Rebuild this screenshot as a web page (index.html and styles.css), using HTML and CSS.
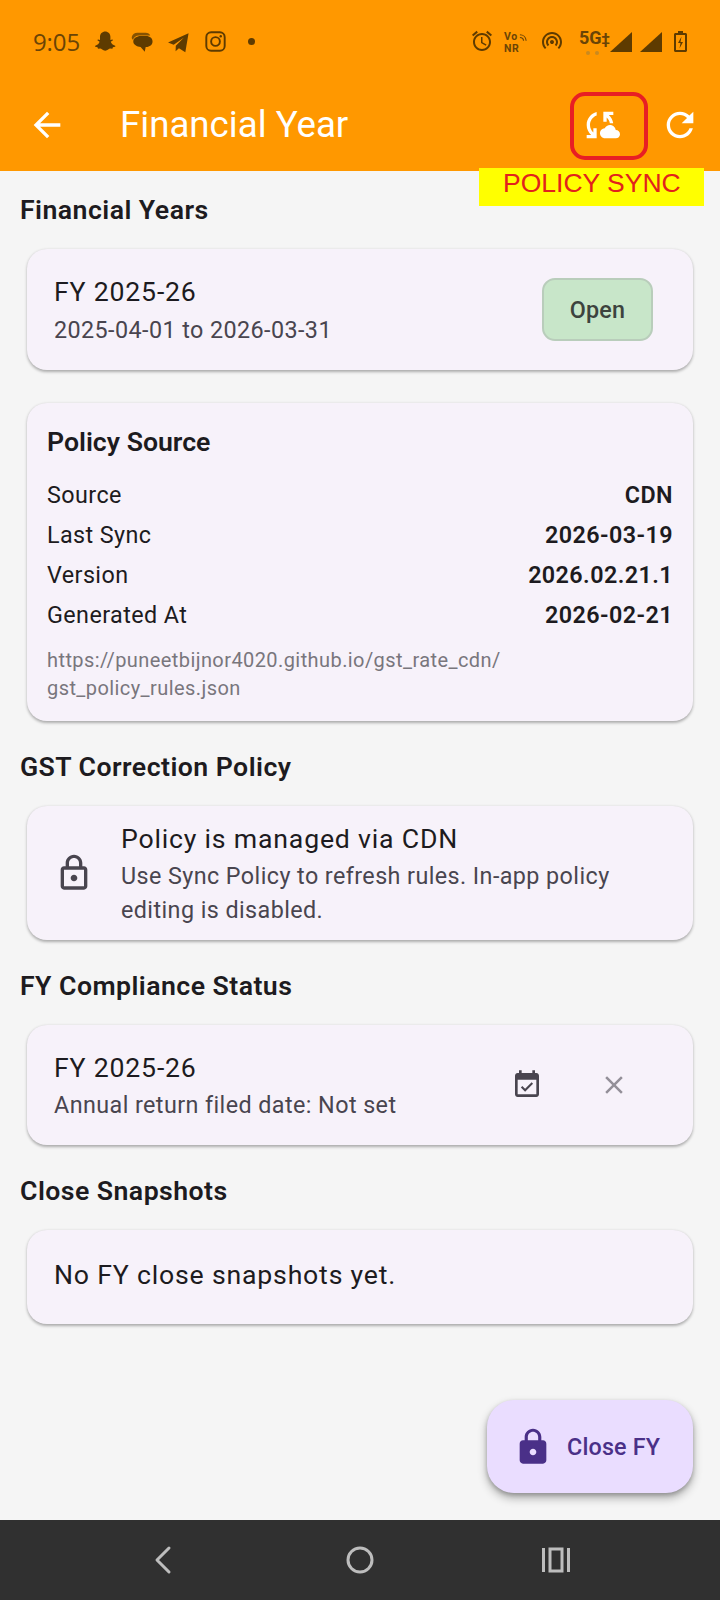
FILE: index.html
```html
<!DOCTYPE html>
<html lang="en">
<head>
<meta charset="utf-8">
<title>Financial Year</title>
<link rel="stylesheet" href="styles.css">
</head>
<body>
<div class="screen">
  <header class="top">
    <div class="status">
      <div class="status-left">
        <span class="time">9:05</span>
        <svg class="si snap" viewBox="1 1 22 22"><path d="M12 1.500c3.300 0 5.400 2.300 5.400 5.300v3.300l1.900-.6c.7 0 .9.8.4 1.100l-1.900 1.100c.5 1.700 2.200 3.400 4.300 4 .5.2.4.9-.1 1l-2.100.5-.5 1.500-2.300-.1c-1 .1-2.500 2.100-4.900 2.100s-3.900-2-4.900-2.100l-2.300.1-.5-1.500-2.100-.5c-.5-.1-.6-.8-.1-1 2.100-.6 3.800-2.300 4.300-4l-1.900-1.100c-.5-.3-.3-1.100.4-1.100l1.900.6V6.800c0-3 2.100-5.300 5.400-5.300z"/></svg>
        <svg class="si msg" viewBox="0 0 24 24"><path d="M7 2h9c2.500 0 4.500 1.300 5 3H9C5.500 5 3 7 2.300 9.500 1 8.800.5 7.500 1 6c.7-2.500 3-4 6-4z" opacity=".75"/><path d="M10.500 5.500h6c4 0 7 2.500 7 6s-3 6-7 6h-.5l-1 5-4.500-5.100c-4-.2-8-2.400-8-5.900 0-3.500 4-6 8-6z"/></svg>
        <svg class="si tg" viewBox="0 0 24 24"><path d="M23.500 1.500 19.800 23 12.500 18.500l-3.800 3.500.2-6.300L18 6.500 6.500 14.500 0 12z"/></svg>
        <svg class="si ig" viewBox="0 0 24 24"><rect x="1.500" y="1.500" width="21" height="21" rx="5.500" fill="none" stroke="#5e3b00" stroke-width="2.200"/><circle cx="12" cy="12" r="5" fill="none" stroke="#5e3b00" stroke-width="2.200"/><circle cx="18" cy="6" r="1.400"/></svg>
        <span class="dot"></span>
      </div>
      <div class="status-right">
        <svg class="si alarm" viewBox="0 0 24 24"><path d="M22 5.720l-4.600-3.860-1.290 1.530 4.600 3.860L22 5.720zM7.880 3.390L6.600 1.860 2 5.710l1.290 1.530 4.590-3.850zM12.500 8H11v6l4.750 2.850.75-1.230-4-2.370V8zM12 4c-4.970 0-9 4.030-9 9s4.030 9 9 9 9-4.030 9-9-4.030-9-9-9zm0 16c-3.870 0-7-3.130-7-7s3.130-7 7-7 7 3.130 7 7-3.130 7-7 7z"/></svg>
        <span class="vonr">
          <span class="vo">Vo<svg class="waves" viewBox="0 0 9 9"><path d="M1 1.500c3.500 0 6.500 2.500 6.800 6.500M1 4.500c2 0 3.800 1.500 4 3.500" fill="none" stroke="#6a4406" stroke-width="1.300"/></svg></span>
          <span>NR</span>
        </span>
        <svg class="si hot" viewBox="0 0 24 24"><path d="M12 11c-1.100 0-2 .9-2 2 0 .55.23 1.050.59 1.410.36.36.86.59 1.410.59s1.050-.23 1.410-.59c.36-.36.59-.86.59-1.410 0-1.100-.9-2-2-2zm6 2c0-3.310-2.690-6-6-6s-6 2.690-6 6c0 1.660.68 3.150 1.760 4.240l1.420-1.420C8.450 15.100 8 14.110 8 13c0-2.210 1.790-4 4-4s4 1.790 4 4c0 1.110-.45 2.100-1.180 2.820l1.420 1.420C17.320 16.150 18 14.660 18 13zM12 3C6.480 3 2 7.480 2 13c0 2.760 1.120 5.260 2.930 7.070l1.420-1.420C4.900 17.210 4 15.210 4 13c0-4.420 3.580-8 8-8s8 3.580 8 8c0 2.210-.9 4.210-2.350 5.650l1.420 1.420C20.880 18.260 22 15.760 22 13c0-5.520-4.480-10-10-10z"/></svg>
        <span class="five"><span class="five-text">5G<small class="dagger">‡</small></span><span class="five-dots"><i></i><i></i></span></span>
        <svg class="si bars" viewBox="0 0 22 20"><path d="M22 0v20H0z"/></svg>
        <svg class="si bars" viewBox="0 0 22 20"><path d="M22 0v20H0z"/></svg>
        <svg class="si batt" viewBox="0 0 13 21"><path d="M4 0h5v2h2.500c.8 0 1.500.7 1.500 1.500v16c0 .8-.7 1.500-1.500 1.500h-10C.7 21 0 20.300 0 19.500v-16C0 2.700.7 2 1.500 2H4zM2 4v15h9V4zm5.500 1.500L4 12h2.500l-1 5.500L9 11H6.500z"/></svg>
      </div>
    </div>
    <div class="toolbar">
      <button class="tool-back" aria-label="Back"><svg class="ic" viewBox="0 0 24 24"><path d="M20 11H7.830l5.590-5.590L12 4l-8 8 8 8 1.410-1.410L7.830 13H20v-2z"/></svg></button>
      <h1 class="app-title">Financial Year</h1>
      <button class="tool-btn" aria-label="Sync Policy"><svg class="ic" viewBox="0 0 24 24"><path d="M21.500 14.980c-.02 0-.03 0-.05.01C21.200 13.300 19.760 12 18 12c-1.400 0-2.600.83-3.160 2.020C13.260 14.100 12 15.400 12 17c0 1.660 1.340 3 3 3l6.500-.02c1.380 0 2.500-1.120 2.500-2.500s-1.120-2.500-2.500-2.500zM10 4.260v2.090C7.670 7.180 6 9.390 6 12c0 1.770.78 3.340 2 4.440V14h2v6H4v-2h2.730C5.060 16.540 4 14.400 4 12c0-3.730 2.550-6.850 6-7.740zM20 6h-2.730c1.430 1.260 2.410 3.010 2.660 5h-2.020c-.23-1.360-.93-2.550-1.910-3.440V10h-2V4h6v2z"/></svg></button>
      <button class="tool-btn" aria-label="Refresh"><svg class="ic" viewBox="0 0 24 24"><path d="M17.650 6.350C16.200 4.900 14.210 4 12 4c-4.420 0-7.990 3.580-7.990 8s3.570 8 7.990 8c3.730 0 6.840-2.550 7.730-6h-2.080c-.82 2.330-3.040 4-5.650 4-3.310 0-6-2.690-6-6s2.690-6 6-6c1.660 0 3.140.69 4.220 1.780L13 11h7V4l-2.350 2.350z"/></svg></button>
    </div>
  </header>

  <main class="content">
    <h2 class="section-title">Financial Years</h2>
    <section class="card row-card fy-card">
      <div class="text-stack">
        <div class="item-title">FY 2025-26</div>
        <div class="item-sub">2025-04-01 to 2026-03-31</div>
      </div>
      <span class="chip">Open</span>
    </section>

    <section class="card policy-card">
      <h3 class="policy-title">Policy Source</h3>
      <div class="kv"><span>Source</span><b>CDN</b></div>
      <div class="kv"><span>Last Sync</span><b>2026-03-19</b></div>
      <div class="kv"><span>Version</span><b>2026.02.21.1</b></div>
      <div class="kv"><span>Generated At</span><b>2026-02-21</b></div>
      <p class="url">https://puneetbijnor4020.github.io/gst_rate_cdn/<br>gst_policy_rules.json</p>
    </section>

    <h2 class="section-title">GST Correction Policy</h2>
    <section class="card row-card lock-card">
      <svg class="ic lock-ic" viewBox="0 0 24 24"><path d="M18 8h-1V6c0-2.760-2.240-5-5-5S7 3.240 7 6v2H6c-1.100 0-2 .9-2 2v10c0 1.100.9 2 2 2h12c1.100 0 2-.9 2-2V10c0-1.100-.9-2-2-2zM9 6c0-1.660 1.340-3 3-3s3 1.340 3 3v2H9V6zm9 14H6V10h12v10zm-6-3c1.100 0 2-.9 2-2s-.9-2-2-2-2 .9-2 2 .9 2 2 2z"/></svg>
      <div class="text-stack">
        <div class="item-title">Policy is managed via CDN</div>
        <div class="item-sub">Use Sync Policy to refresh rules. In-app policy<br>editing is disabled.</div>
      </div>
    </section>

    <h2 class="section-title">FY Compliance Status</h2>
    <section class="card row-card status-card">
      <div class="text-stack">
        <div class="item-title">FY 2025-26</div>
        <div class="item-sub">Annual return filed date: Not set</div>
      </div>
      <div class="actions">
        <button class="act" aria-label="Set date"><svg class="ic cal-ic" viewBox="0 0 24 24"><path d="M19 3h-1V1h-2v2H8V1H6v2H5c-1.110 0-1.990.9-1.990 2L3 19c0 1.100.89 2 2 2h14c1.100 0 2-.9 2-2V5c0-1.100-.9-2-2-2zm0 16H5V8h14v11zm-2.470-7.940L15.470 10l-4.880 4.880-2.120-2.120-1.060 1.060L10.590 17l5.940-5.940z"/></svg></button>
        <button class="act" aria-label="Clear"><svg class="ic x-ic" viewBox="0 0 24 24"><path d="M19 6.410L17.590 5 12 10.590 6.410 5 5 6.410 10.590 12 5 17.590 6.410 19 12 13.410 17.590 19 19 17.590 13.410 12z"/></svg></button>
      </div>
    </section>

    <h2 class="section-title">Close Snapshots</h2>
    <section class="card row-card empty-card">
      <div class="item-title">No FY close snapshots yet.</div>
    </section>
  </main>

  <nav class="navbar">
    <svg class="nav-ic" viewBox="0 0 30 30"><path d="M21 3 9 15l12 12" fill="none" stroke="#bdbdbd" stroke-width="3" stroke-linecap="round" stroke-linejoin="round"/></svg>
    <svg class="nav-ic" viewBox="0 0 30 30"><circle cx="15" cy="15" r="12" fill="none" stroke="#bdbdbd" stroke-width="3"/></svg>
    <svg class="nav-ic" viewBox="0 0 30 30"><path d="M2.500 3v24M27.500 3v24" stroke="#bdbdbd" stroke-width="3" fill="none"/><rect x="9" y="4" width="12" height="22" fill="none" stroke="#bdbdbd" stroke-width="3"/></svg>
  </nav>

  <div class="callout-box"></div>
  <div class="callout-label">POLICY SYNC</div>

  <button class="fab">
    <svg class="ic fab-ic" viewBox="0 0 24 24"><path d="M18 8h-1V6c0-2.760-2.240-5-5-5S7 3.240 7 6v2H6c-1.100 0-2 .9-2 2v10c0 1.100.9 2 2 2h12c1.100 0 2-.9 2-2V10c0-1.100-.9-2-2-2zm-6 9c-1.100 0-2-.9-2-2s.9-2 2-2 2 .9 2 2-.9 2-2 2zm3.100-9H8.900V6c0-1.710 1.390-3.100 3.100-3.100 1.710 0 3.100 1.390 3.100 3.100v2z"/></svg>
    <span>Close FY</span>
  </button>
</div>
</body>
</html>
```

FILE: styles.css
```css
* { box-sizing: border-box; }
html, body { margin: 0; padding: 0; }
body { width: 720px; height: 1600px; overflow: hidden; font-family: Roboto, "Liberation Sans", sans-serif; color: #1d1b20; }
button { border: 0; background: none; padding: 0; font: inherit; color: inherit; display: flex; align-items: center; justify-content: center; }
h1, h2, h3, p { margin: 0; font-weight: inherit; }

.screen { position: relative; width: 720px; height: 1600px; display: flex; flex-direction: column; background: #f5f5f5; overflow: hidden; }
.ic { width: 40px; height: 40px; fill: currentColor; display: block; flex: none; }

/* header */
.top { background: #ff9800; color: #fff; height: 171px; flex: none; }
.status { height: 78px; padding: 31px 33px 0; display: flex; justify-content: space-between; align-items: flex-start; color: #5e3b00; }
.status-left, .status-right { display: flex; align-items: flex-start; height: 22px; }
.si { display: block; fill: #5e3b00; flex: none; }
.time { font-family: "Open Sans", Roboto, sans-serif; font-size: 24px; line-height: 22px; width: 60px; letter-spacing: -.1px; color: #6a4406; }
.snap { width: 24px; height: 22px; }
.msg { width: 22px; height: 22px; margin: 0 0 0 14px; }
.tg { width: 23px; height: 21px; margin: 1px 0 0 14px; }
.ig { width: 21px; height: 21px; margin: 0 0 0 15px; }
.dot { width: 7px; height: 7px; border-radius: 50%; background: #5e3b00; margin: 7px 0 0 22px; }
.alarm { width: 24px; height: 24px; margin-top: -2px; }
.vonr { display: flex; flex-direction: column; font-weight: 700; font-size: 10.500px; line-height: 12.400px; letter-spacing: .6px; width: 23px; margin: 0 0 0 10px; color: #6a4406; }
.vo { display: flex; align-items: center; }
.waves { width: 9px; height: 9px; display: block; margin-left: 1px; }
.hot { width: 24px; height: 24px; margin: -2px 0 0 13px; }
.five { width: 31px; margin: -1px 0 0 15px; display: flex; flex-direction: column; color: #6a4406; }
.five-text { font-weight: 700; font-size: 18px; line-height: 15px; letter-spacing: -.2px; white-space: nowrap; }
.dagger { font-size: 15px; font-weight: 700; }
.five-dots { display: flex; gap: 5px; margin: 4px 0 0 7px; }
.five-dots i { width: 4px; height: 4px; border-radius: 50%; background: #c98a20; }
.bars { width: 22px; height: 20px; margin-top: 1px; }
.bars + .bars { margin-left: 8px; }
.batt { width: 13px; height: 21px; margin-left: 12px; }

.toolbar { height: 93px; display: flex; align-items: center; }
.tool-back { width: 93px; height: 93px; padding-left: 27px; justify-content: flex-start; }
.app-title { flex: 1; margin-left: 27px; font-size: 36.67px; line-height: 46px; font-weight: 400; }
.tool-btn { width: 80px; height: 80px; }

/* content */
.content { flex: 1; padding-top: 19px; }
.section-title { height: 40px; margin: 0 20px 19px; font-size: 26.67px; line-height: 40px; font-weight: 600; letter-spacing: .45px; color: #1d1b20; }
.card + .section-title { margin-top: 26px; }
.card { margin: 0 27px; background: #f7f2fa; border-radius: 20px; box-shadow: 0 1.700px 3px rgba(0,0,0,.3); }
.row-card { display: flex; align-items: center; }
.text-stack { flex: 1; min-width: 0; display: flex; flex-direction: column; gap: 1.500px; }
.item-title { font-size: 26.67px; line-height: 40px; letter-spacing: .8px; color: #1d1b20; }
.item-sub { font-size: 23.33px; line-height: 33.330px; letter-spacing: .42px; color: #49454f; }

.fy-card { height: 121px; padding: 0 40px 0 27px; }
.chip { width: 111px; height: 63px; display: flex; align-items: center; justify-content: center; background: #c8e6c9; border: 2px solid #b9cdbb; border-radius: 13px; font-size: 23.33px; font-weight: 500; letter-spacing: .17px; color: #3d433e; }

.policy-card { height: 318px; margin-top: 33px; padding: 19px 20px; }
.policy-title { font-size: 26.67px; line-height: 40px; font-weight: 600; margin-bottom: 13px; }
.kv { height: 40px; display: flex; justify-content: space-between; align-items: center; font-size: 23.33px; letter-spacing: .42px; color: #1d1b20; }
.kv b { font-weight: 600; }
.url { margin-top: 11px; font-size: 20px; line-height: 28px; letter-spacing: .42px; color: #79767d; }

.lock-card { height: 134px; padding: 0 27px; }
.lock-ic { color: #49454f; margin-right: 27px; }
.status-card { height: 120px; padding: 0 39px 0 27px; }
.actions { display: flex; gap: 7px; }
.act { width: 80px; height: 80px; }
.cal-ic { width: 32px; height: 32px; color: #49454f; }
.x-ic { width: 30px; height: 30px; color: #938f98; }
.empty-card { height: 94px; padding: 0 27px 4px; }

/* nav */
.navbar { height: 80px; flex: none; background: #303030; display: flex; align-items: center; }
.nav-ic { width: 30px; height: 30px; display: block; flex: none; }
.nav-ic:nth-child(1) { margin-left: 148px; }
.nav-ic:nth-child(2) { margin-left: 167px; }
.nav-ic:nth-child(3) { margin-left: 166px; }

/* overlays */
.callout-box { position: absolute; left: 570px; top: 92px; width: 78px; height: 68px; border: 4px solid #e81e24; border-radius: 15px; }
.callout-label { position: absolute; left: 479px; top: 168px; width: 225px; height: 38px; background: #ffff00; color: #e2221c; font-family: "Liberation Sans", Arial, sans-serif; font-size: 26.500px; line-height: 30px; padding-left: 24px; }
.fab { position: absolute; left: 487px; top: 1400px; width: 206px; height: 93px; border-radius: 27px; background: #eaddff; color: #4a3088; padding-left: 26px; justify-content: flex-start; gap: 14px; font-size: 23.33px; font-weight: 500; letter-spacing: .17px; box-shadow: 0 5px 10px rgba(0,0,0,.3), 0 2px 4px rgba(0,0,0,.2); }
```
